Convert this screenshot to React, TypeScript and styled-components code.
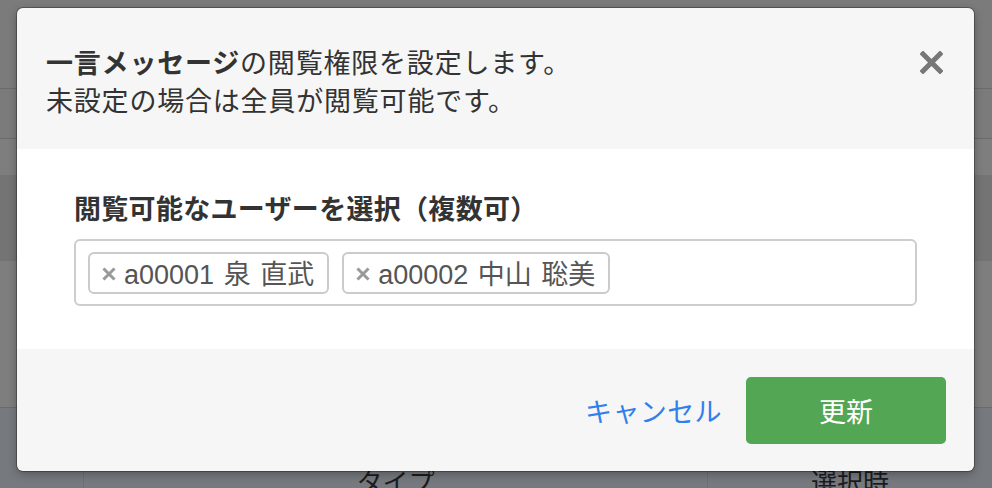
import * as React from "react";
import styled, { createGlobalStyle } from "styled-components";

const GlobalStyle = createGlobalStyle`
  html, body {
    margin: 0;
    padding: 0;
    width: 992px;
    height: 488px;
    overflow: hidden;
    font-family: "Noto Sans CJK JP", "Liberation Sans", sans-serif;
  }
`;

const SPage = styled.div`
  position: relative;
  width: 992px;
  height: 488px;
  display: flex;
  flex-direction: column;
  background: #7c7c7c;
`;

type SBandProps = { h: number; bg: string; line?: boolean };
const SBand = styled.div<SBandProps>`
  height: ${(props) => props.h}px;
  background: ${(props) => props.bg};
  border-bottom: ${(props) => (props.line ? "1px solid #6b6b6b" : "none")};
  flex-shrink: 0;
`;

const STableRow = styled.div`
  flex: 1;
  display: grid;
  grid-template-columns: 83px 624px 1fr;
  background: #76797e;

  .cell {
    border-left: 1px solid #6c6f74;
    padding-top: 58px;
    text-align: center;
    font-size: 26px;
    line-height: 30px;
    color: #1c1c1e;
    white-space: nowrap;
  }

  .cell:first-child {
    border-left: none;
  }
`;

const SModal = styled.div`
  position: absolute;
  top: 8px;
  left: 17px;
  width: 957px;
  border-radius: 6px;
  overflow: hidden;
  box-shadow: 0 0 0 1px rgba(0, 0, 0, 0.28), 0 3px 10px rgba(0, 0, 0, 0.3);
  color: #333;
`;

const SHeader = styled.div`
  display: flex;
  justify-content: space-between;
  align-items: flex-start;
  padding: 35px 31px 30px 29px;
  background: #f6f6f6;
  font-size: 27px;
  line-height: 38px;
  letter-spacing: 0.8px;

  strong {
    font-weight: 700;
  }
`;

const SClose = styled.button`
  border: none;
  background: transparent;
  padding: 0;
  margin-top: 8px;
  width: 23px;
  height: 23px;
  cursor: pointer;
  display: flex;
`;

const SBody = styled.div`
  padding: 40px 57px 43px;
  background: #fff;

  .label {
    font-size: 27px;
    line-height: 38px;
    font-weight: 700;
    letter-spacing: 0.3px;
    margin-bottom: 12px;
  }
`;

const SSelect = styled.div`
  box-sizing: border-box;
  height: 67px;
  border: 2px solid #cdcdcd;
  border-radius: 6px;
  padding: 0 12px;
  display: flex;
  align-items: center;
  gap: 13px;
`;

const STag = styled.div`
  box-sizing: border-box;
  height: 42px;
  border: 2px solid #cbcbcb;
  border-radius: 6px;
  padding: 0 13px 0 12px;
  display: flex;
  align-items: center;
  gap: 8px;
  font-family: "Liberation Sans", "Noto Sans CJK JP", sans-serif;
  font-size: 27px;
  word-spacing: 2px;
  color: #555;
  white-space: nowrap;

  svg {
    flex-shrink: 0;
    margin-top: 2px;
  }
`;

const SFooter = styled.div`
  display: flex;
  justify-content: flex-end;
  align-items: center;
  gap: 24px;
  padding: 28px 28px 27px;
  background: #f6f6f6;
`;

const SCancel = styled.a`
  font-size: 27px;
  color: #2f80ed;
  cursor: pointer;
  line-height: 38px;
  letter-spacing: 0.4px;
`;

const SSubmit = styled.button`
  width: 200px;
  height: 67px;
  border: none;
  border-radius: 5px;
  background: #53a653;
  color: #fff;
  font-family: "Noto Sans CJK JP", sans-serif;
  font-size: 27px;
  cursor: pointer;
`;

const users = [
  { code: "a00001", name: "泉 直武" },
  { code: "a00002", name: "中山 聡美" },
];

export default function App() {
  return (
    <>
      <GlobalStyle />
      <SPage>
        <SBand h={88} bg="#7b7b7b" line />
        <SBand h={49} bg="#7b7b7b" line />
        <SBand h={36} bg="#7e7e7e" />
        <SBand h={86} bg="#747474" />
        <SBand h={146} bg="#7e7e7e" line />
        <STableRow>
          <div className="cell" />
          <div className="cell">タイプ</div>
          <div className="cell">選択時</div>
        </STableRow>

        <SModal>
          <SHeader>
            <div>
              <strong>一言メッセージ</strong>の閲覧権限を設定します。
              <br />
              未設定の場合は全員が閲覧可能です。
            </div>
            <SClose aria-label="close">
              <svg width="23" height="23" viewBox="0 0 23 23">
                <path
                  d="M3 3 L20 20 M20 3 L3 20"
                  stroke="#777"
                  strokeWidth="5"
                  strokeLinecap="square"
                  fill="none"
                />
              </svg>
            </SClose>
          </SHeader>
          <SBody>
            <div className="label">閲覧可能なユーザーを選択（複数可）</div>
            <SSelect>
              {users.map((u) => (
                <STag key={u.code}>
                  <svg width="14" height="14" viewBox="0 0 14 14">
                    <path
                      d="M2.5 2.5 L11.5 11.5 M11.5 2.5 L2.5 11.5"
                      stroke="#999"
                      strokeWidth="3"
                      strokeLinecap="square"
                      fill="none"
                    />
                  </svg>
                  <span>
                    {u.code} {u.name}
                  </span>
                </STag>
              ))}
            </SSelect>
          </SBody>
          <SFooter>
            <SCancel>キャンセル</SCancel>
            <SSubmit>更新</SSubmit>
          </SFooter>
        </SModal>
      </SPage>
    </>
  );
}
